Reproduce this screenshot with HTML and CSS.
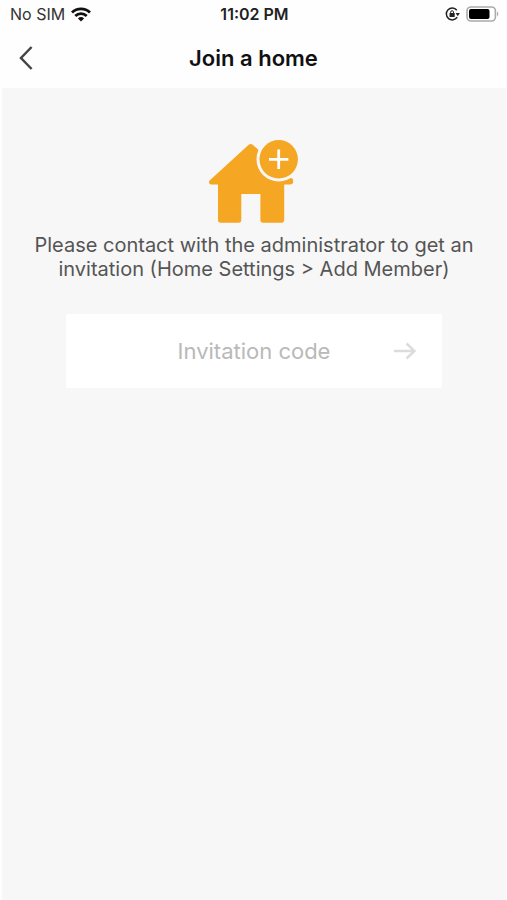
FILE: index.html
```html
<!DOCTYPE html>
<html lang="en">
<head>
<meta charset="utf-8">
<meta name="viewport" content="width=device-width, initial-scale=1">
<title>Join a home</title>
<link rel="stylesheet" href="styles.css">
</head>
<body>
<div class="status">
  <div class="status-left">
    <span class="carrier">No SIM</span>
    <svg width="20" height="15" viewBox="0 0 20 15" aria-hidden="true">
      <g fill="none" stroke="#111" stroke-width="2.8">
        <path d="M1 5.4a13 13 0 0 1 18 0"/>
        <path d="M4.3 9a8.2 8.2 0 0 1 11.4 0"/>
      </g>
      <path d="M6.9 11.5a4.5 4.5 0 0 1 6.2 0L10 14.6z" fill="#111"/>
    </svg>
  </div>
  <span class="time">11:02 PM</span>
  <div class="status-right">
    <svg width="15" height="14" viewBox="0 0 15 14" aria-hidden="true">
      <path d="M12.2 10.2A5.9 5.9 0 1 1 11.8 3.2" fill="none" stroke="#222" stroke-width="1.5"/>
      <path d="M10.6 6h4.2l-2 3.2z" fill="#222"/>
      <path d="M5.7 6.6V5.1a1.4 1.4 0 0 1 2.8 0v1.5" fill="none" stroke="#222"/>
      <rect x="4.5" y="6" width="5.2" height="4" rx=".6" fill="#222"/>
    </svg>
    <svg width="33" height="16" viewBox="0 0 33 16" aria-hidden="true">
      <rect x="1" y="1" width="28.400" height="14" rx="4" fill="#fff" stroke="#aaa" stroke-width="1.6"/>
      <rect x="3" y="3" width="20.500" height="10" rx="2" fill="#000"/>
      <path d="M31 5.600c1.800.8 1.800 4 0 4.800z" fill="#aaa"/>
    </svg>
  </div>
</div>
<header class="nav">
  <button class="back" type="button" aria-label="Back">
    <svg width="14" height="26" viewBox="0 0 14 26" aria-hidden="true">
      <path d="M12.6 2L2 13l10.600 11" fill="none" stroke="#444" stroke-width="2.500"/>
    </svg>
  </button>
  <h1 class="title">Join a home</h1>
</header>
<main class="content">
  <svg class="house" width="92" height="86" viewBox="0 0 92 86" aria-hidden="true">
    <path d="M41 6.600q1.700-1.200 3.400 0L60 20l14 20h8.500q2.700 0 2.700 3.200T82 46.400h-5.800V82q0 2.800-2.800 2.800H55.200q-2.800 0-2.800-2.800V56H33.300V82q0 2.800-2.800 2.800H12.800Q10 84.800 10 82V46.400H3.200Q1 46.400 1 44.200q0-1.200 1.200-2.200z" fill="#f5a623"/>
    <circle cx="70.700" cy="21.300" r="22.200" fill="#f7f7f7"/>
    <circle cx="70.700" cy="21.300" r="19.200" fill="#f5a623"/>
    <path d="M61 21.300h19.400M70.700 11.600v19.400" stroke="#fff" stroke-width="2.800"/>
  </svg>
  <p class="hint">Please contact with the administrator to get an invitation (Home Settings &gt; Add Member)</p>
  <form class="code">
    <input class="code-input" type="text" placeholder="Invitation code" aria-label="Invitation code">
    <button class="submit" type="button" aria-label="Submit">
      <svg width="24" height="18" viewBox="0 0 24 18" aria-hidden="true">
        <path d="M1 9h20M13.500 1.500L21.500 9l-8 7.500" fill="none" stroke="#dcdcdc" stroke-width="2.400"/>
      </svg>
    </button>
  </form>
</main>
</body>
</html>
```
FILE: styles.css
```css
* {
  box-sizing: border-box;
}

body {
  margin: 0;
  min-height: 100vh;
  display: flex;
  flex-direction: column;
  background: #fefefe;
  color: #111;
  font-family: Inter, "Liberation Sans", sans-serif;
}

button {
  border: 0;
  background: none;
  padding: 0;
  display: flex;
  align-items: center;
  justify-content: center;
}

svg {
  display: block;
  flex: none;
}

.status {
  display: grid;
  grid-template-columns: 1fr auto 1fr;
  align-items: center;
  height: 28px;
  padding: 0 8px 0 10px;
  font-size: 16px;
  line-height: 20px;
}

.status-left,
.status-right {
  display: flex;
  align-items: center;
  gap: 6px;
}

.status-right {
  justify-content: flex-end;
}

.carrier {
  color: #333;
}

.time {
  font-weight: 600;
  color: #222;
}

.nav {
  display: grid;
  grid-template-columns: 52px 1fr 52px;
  align-items: center;
  height: 60px;
}

.back {
  height: 60px;
}

.title {
  margin: 0;
  text-align: center;
  font-size: 22px;
  line-height: 28px;
  font-weight: 600;
}

.content {
  flex: 1;
  margin: 0 1px 0 2px;
  padding: 50px 28px 0;
  display: flex;
  flex-direction: column;
  align-items: center;
  background: #f7f7f7;
}

.hint {
  margin: 9px 0 0;
  text-align: center;
  font-size: 20px;
  line-height: 24px;
  color: #555;
}

.code {
  display: flex;
  align-self: stretch;
  margin: 33px 36px 0;
  height: 74px;
  background: #fff;
  border-radius: 2px;
}

.code-input {
  flex: 1;
  min-width: 0;
  border: 0;
  padding: 0 0 0 74px;
  background: none;
  text-align: center;
  font: 22px/28px Inter, "Liberation Sans", sans-serif;
  color: #333;
  outline: none;
}

.code-input::placeholder {
  color: #b9b9b9;
  opacity: 1;
}

.submit {
  width: 74px;
}
```
